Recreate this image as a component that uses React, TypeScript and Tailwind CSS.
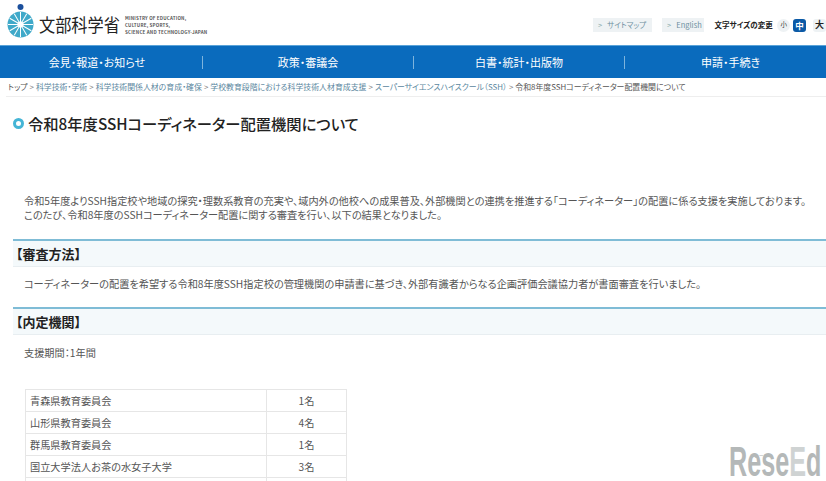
import React from "react";

const font = { fontFamily: '"Noto Sans CJK JP", "Liberation Sans", sans-serif' };

const navItems = ["会見・報道・お知らせ", "政策・審議会", "白書・統計・出版物", "申請・手続き"];

const crumbs = [
  "科学技術・学術",
  "科学技術関係人材の育成・確保",
  "学校教育段階における科学技術人材育成支援",
];

const rows = [
  ["青森県教育委員会", "1名"],
  ["山形県教育委員会", "4名"],
  ["群馬県教育委員会", "1名"],
  ["国立大学法人お茶の水女子大学", "3名"],
  ["", ""],
];

const Logo = () => (
  <svg width="28" height="38" viewBox="0 0 28 38" className="shrink-0">
    <circle cx="13.5" cy="6" r="3" fill="#1b4f9c" />
    <circle cx="13.5" cy="23.5" r="13" fill="#3fa9c9" />
    {[0, 30, 60, 90, 120, 150].map((a) => (
      <line
        key={a}
        x1="13.5"
        y1="11"
        x2="13.5"
        y2="36"
        stroke="#fff"
        strokeWidth="1"
        transform={`rotate(${a} 13.5 23.5)`}
      />
    ))}
    <circle cx="13.5" cy="23.5" r="3" fill="#fff" />
  </svg>
);

const SectionHeading = ({ children }: { children: React.ReactNode }) => (
  <h2 className="h-[28px] bg-[#f4f9fb] border-t-2 border-[#7fbcd6] border-b border-b-[#e8eef1] flex items-center pl-[3px] text-[13px] font-bold text-[#222] leading-none">
    {children}
  </h2>
);

const LinkButton = ({ label, className }: { label: string; className: string }) => (
  <span className={`h-[14px] bg-[#eef2f4] flex items-center gap-[5px] text-[7.5px] text-[#6d8fa0] ${className}`}>
    <span className="text-[#8aa]">&gt;</span>
    {label}
  </span>
);

export default function App() {
  return (
    <div
      className="relative w-[826px] h-[481px] overflow-hidden bg-white text-[#555] [font-feature-settings:'palt']"
      style={font}
    >
      <header className="h-[45px] flex items-start justify-between">
        <div className="flex items-center pl-[7px] pt-[1px]">
          <Logo />
          <span className="ml-[4px] mt-[8px] w-[81px] text-[16.2px] leading-none [font-feature-settings:'normal'] scale-y-[1.15] text-[#222]">
            文部科学省
          </span>
          <div className="ml-[5px] mt-[10px] text-[4.5px] leading-[7px] font-bold text-[#555] tracking-[0.2px]">
            <div>MINISTRY OF EDUCATION,</div>
            <div>CULTURE, SPORTS,</div>
            <div>SCIENCE AND TECHNOLOGY-JAPAN</div>
          </div>
        </div>
        <div className="flex items-center pt-[18px] whitespace-nowrap w-[233px] shrink-0">
          <LinkButton label="サイトマップ" className="w-[60px] pl-[5px]" />
          <LinkButton label="English" className="w-[43px] ml-[10px] pl-[5px]" />
          <span className="ml-[10px] text-[7.5px] font-bold text-[#222] w-[62px]">文字サイズの変更</span>
          <span className="ml-[2px] w-[13px] h-[13px] rounded-full bg-[#eef2f4] text-[6.5px] flex items-center justify-center text-[#333]">小</span>
          <span className="ml-[3px] w-[13px] h-[13px] rounded-[3px] bg-[#0b5aa6] text-[8.5px] font-bold flex items-center justify-center text-white">中</span>
          <span className="ml-[7px] w-[13px] h-[13px] shrink-0 rounded-[3px] bg-[#eef2f4] text-[9px] font-bold flex items-center justify-center text-[#222]">大</span>
        </div>
      </header>

      <nav className="h-[33px] w-[844px] -ml-[8px] bg-[#0a6bbd] border-t border-[#5aa3d8] grid grid-cols-4 items-center">
        {navItems.map((item, i) => (
          <div
            key={item}
            className={`h-[13px] flex items-center justify-center text-[11px] text-white ${i < 3 ? "border-r border-[#7db4dd]" : ""}`}
          >
            {item}
          </div>
        ))}
      </nav>

      <div className="ml-[6px] pl-[2px] h-[19px] flex items-center border-b border-[#eeeeee] text-[7.9px] text-[#5b87a0] whitespace-nowrap overflow-hidden">
        <span className="text-[#555]">トップ</span>
        {crumbs.map((c) => (
          <React.Fragment key={c}>
            <span className="mx-[2px] text-[#777]">&gt;</span>
            <span>{c}</span>
          </React.Fragment>
        ))}
        <span className="mx-[2px] text-[#777]">&gt;</span>
        <span>スーパーサイエンスハイスクール（SSH）</span>
        <span className="mx-[2px] text-[#777]">&gt;</span>
        <span className="text-[#555]">令和8年度SSHコーディネーター配置機関について</span>
      </div>

      <main className="pl-[13px]">
        <h1 className="mt-[16px] h-[20px] flex items-center text-[15.3px] font-medium text-[#222] whitespace-nowrap">
          <span className="w-[11px] h-[11px] mr-[4px] rounded-full border-[3px] border-[#45b5d6] bg-white" />
          令和8年度SSHコーディネーター配置機関について
        </h1>

        <div className="mt-[61px] pl-[11px] text-[10.2px] leading-[14px] whitespace-nowrap">
          <p>令和5年度よりSSH指定校や地域の探究・理数系教育の充実や、域内外の他校への成果普及、外部機関との連携を推進する「コーディネーター」の配置に係る支援を実施しております。</p>
          <p>このたび、令和8年度のSSHコーディネーター配置に関する審査を行い、以下の結果となりました。</p>
        </div>

        <div className="mt-[17px]">
          <SectionHeading>【審査方法】</SectionHeading>
        </div>
        <p className="mt-[10px] pl-[11px] text-[10.2px] leading-[14px] whitespace-nowrap">
          コーディネーターの配置を希望する令和8年度SSH指定校の管理機関の申請書に基づき、外部有識者からなる企画評価会議協力者が書面審査を行いました。
        </p>

        <div className="mt-[16px]">
          <SectionHeading>【内定機関】</SectionHeading>
        </div>
        <p className="mt-[11px] pl-[11px] text-[10.2px] leading-[14px]">支援期間：1年間</p>

        <table className="mt-[29px] ml-[12px] w-[322px] border-collapse text-[10.2px] table-fixed">
          <tbody>
            {rows.map(([name, count], i) => (
              <tr key={i} className="h-[22px]">
                <td className="w-[241px] border border-[#e6e6e6] pl-[4px] py-0">{name}</td>
                <td className="border border-[#e6e6e6] text-center py-0">{count}</td>
              </tr>
            ))}
          </tbody>
        </table>
      </main>

      <div
        className="absolute left-[729px] top-[443px] text-[42px] font-bold leading-[38px] text-[#b4b8b8] scale-x-[0.6] origin-left whitespace-nowrap"
        style={{ fontFamily: '"Liberation Sans", sans-serif' }}
      >
        Rese<span className="text-[#cfd3d3]">E</span>d
      </div>
      <span className="absolute left-[750px] top-[452px] text-[5px] leading-none text-[#b4b8b8]">リシード</span>
    </div>
  );
}
